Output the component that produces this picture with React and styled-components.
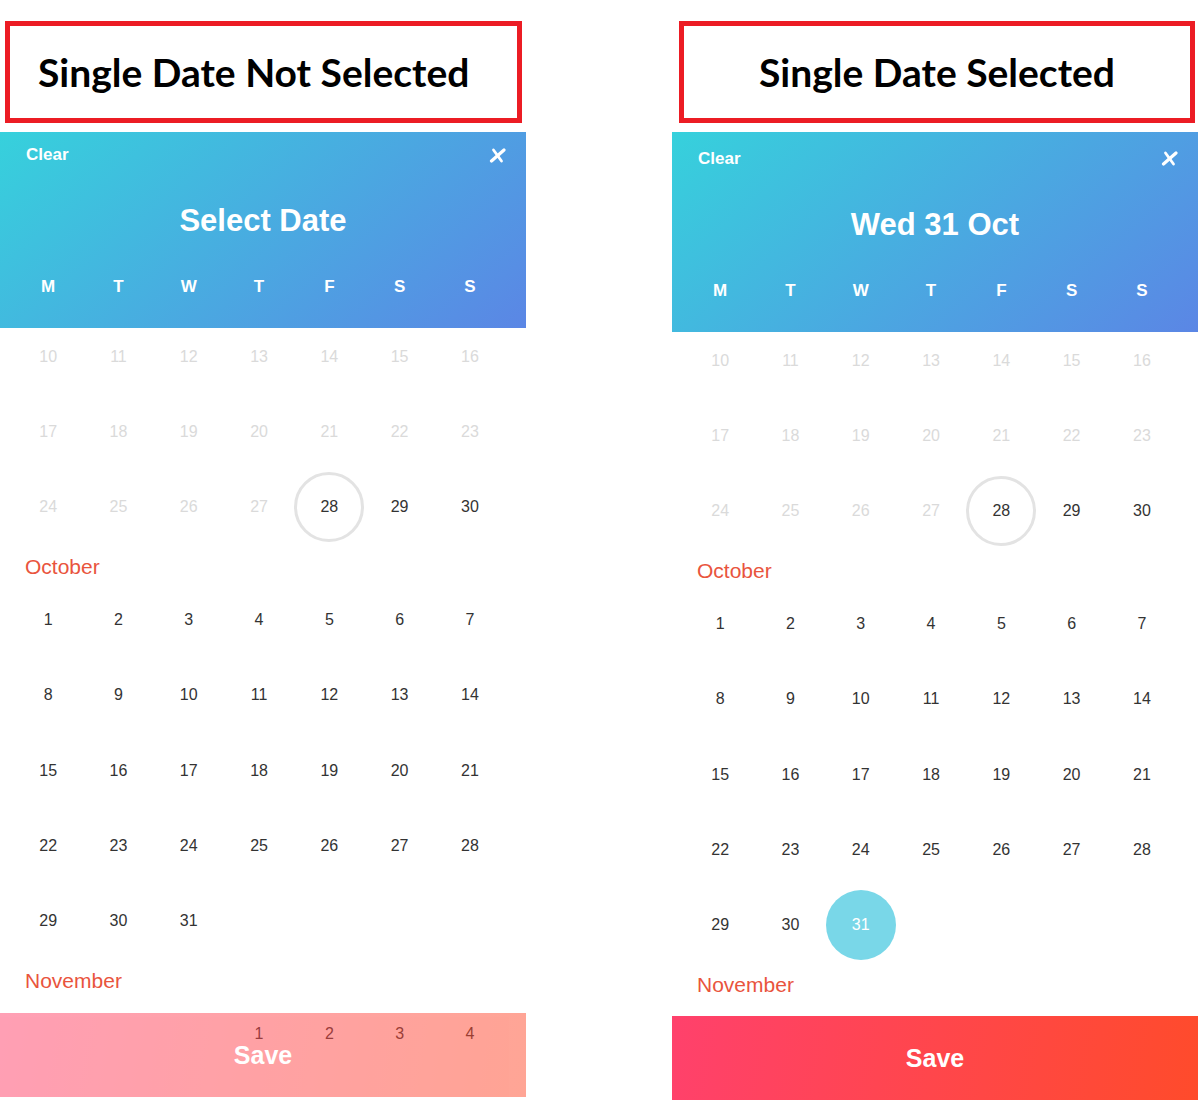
import React, { useLayoutEffect, useRef } from 'react';
import styled, { createGlobalStyle } from 'styled-components';

const GlobalStyle = createGlobalStyle`
  html, body { margin: 0; padding: 0; background: #fff; }
  body { font-family: "Liberation Sans", Arial, sans-serif; }
`;

const Page = styled.div`
  display: flex;
  gap: 146px;
  width: 1198px;
  height: 1100px;
  overflow: hidden;
`;

const Column = styled.div`
  width: 526px;
  display: flex;
  flex-direction: column;
`;

const Caption = styled.div`
  margin: 21px ${(p) => p.$mr}px 0 ${(p) => p.$ml}px;
  height: 102px;
  box-sizing: border-box;
  border: 5px solid #ec1c24;
  display: flex;
  align-items: center;
  justify-content: ${(p) => (p.$center ? 'center' : 'flex-start')};
  padding-left: ${(p) => (p.$center ? 0 : 28)}px;
  font-family: Lato, "Open Sans", sans-serif;
  font-weight: 700;
  font-size: 39px;
  color: #000;
`;

const Picker = styled.div`
  margin-top: 9px;
  position: relative;
  height: ${(p) => p.$h}px;
  display: flex;
  flex-direction: column;
  overflow: hidden;
`;

const Header = styled.div`
  background: linear-gradient(140deg, #36d1dc 0%, #5b86e5 100%);
  padding: ${(p) => p.$top}px 0 31px;
  color: #fff;
  flex: none;
`;

const TopRow = styled.div`
  display: flex;
  justify-content: space-between;
  align-items: center;
  height: 20px;
  padding: 0 20px 0 26px;
`;

const ClearBtn = styled.span`
  font-weight: 700;
  font-size: 17px;
`;

const Title = styled.div`
  margin-top: 38px;
  height: 36px;
  line-height: 36px;
  text-align: center;
  font-weight: 700;
  font-size: 31px;
`;

const Grid7 = styled.div`
  display: grid;
  grid-template-columns: repeat(7, 70.3px);
  padding-left: 13px;
`;

const Weekdays = styled(Grid7)`
  margin-top: 38px;
  height: 20px;
  line-height: 20px;
`;

const Weekday = styled.span`
  text-align: center;
  font-weight: 700;
  font-size: 17px;
`;

const Scroller = styled.div`
  flex: 1;
  min-height: 0;
  overflow: hidden;
`;

const MonthLabel = styled.div`
  height: 37.65px;
  box-sizing: border-box;
  padding: 7px 0 0 25px;
  display: flex;
  align-items: center;
  font-size: 21px;
  color: #e9543d;
`;

const Week = styled(Grid7)`
  height: 75.3px;
`;

const Day = styled.div`
  display: flex;
  align-items: center;
  justify-content: center;
`;

const DayMark = styled.span`
  width: 70px;
  height: 70px;
  flex: none;
  border-radius: 50%;
  box-sizing: border-box;
  display: flex;
  align-items: center;
  justify-content: center;
  font-size: 16px;
  color: ${(p) => (p.$selected ? '#fff' : p.$disabled ? '#dadada' : '#333')};
  background: ${(p) => (p.$selected ? '#79d7e8' : 'transparent')};
  border: 3px solid ${(p) => (p.$today ? '#e3e3e3' : 'transparent')};
`;

const SaveBar = styled.button`
  position: absolute;
  left: 0;
  right: 0;
  bottom: 0;
  height: 84px;
  border: 0;
  padding: 0;
  background: linear-gradient(100deg, #ff416c 0%, #ff4b2b 100%);
  opacity: ${(p) => (p.$dim ? 0.5 : 1)};
  color: #fff;
  font-family: "Liberation Sans", Arial, sans-serif;
  font-weight: 700;
  font-size: 25px;
`;

const CloseIcon = () => (
  <svg width="17" height="15" viewBox="0 0 17 15" fill="none">
    <path d="M4.5 2 L12.5 13" stroke="#fff" strokeWidth="2.8" strokeLinecap="round" />
    <path d="M15 2 L2.5 13" stroke="#fff" strokeWidth="3.2" strokeLinecap="round" />
  </svg>
);

const WEEKDAYS = ['M', 'T', 'W', 'T', 'F', 'S', 'S'];

function buildMonth(startOffset, length) {
  const cells = [];
  for (let i = 0; i < startOffset; i++) cells.push(null);
  for (let d = 1; d <= length; d++) cells.push(d);
  while (cells.length % 7) cells.push(null);
  const weeks = [];
  for (let i = 0; i < cells.length; i += 7) weeks.push(cells.slice(i, i + 7));
  return weeks;
}

// The list is loaded from the week of Sep 10 onward and scrolled a little.
const MONTHS = [
  { key: 'sep', name: null, weeks: buildMonth(5, 30).slice(2) },
  { key: 'oct', name: 'October', weeks: buildMonth(0, 31) },
  { key: 'nov', name: 'November', weeks: buildMonth(3, 30).slice(0, 2) },
];

function DatePicker({ selected, headerTop, height }) {
  const ref = useRef(null);
  useLayoutEffect(() => {
    if (ref.current) ref.current.scrollTop = 9;
  }, []);
  return (
    <Picker $h={height}>
      <Header $top={headerTop}>
        <TopRow>
          <ClearBtn>Clear</ClearBtn>
          <CloseIcon />
        </TopRow>
        <Title>{selected ? 'Wed 31 Oct' : 'Select Date'}</Title>
        <Weekdays>
          {WEEKDAYS.map((w, i) => (
            <Weekday key={i}>{w}</Weekday>
          ))}
        </Weekdays>
      </Header>
      <Scroller ref={ref}>
        {MONTHS.map((m) => (
          <React.Fragment key={m.key}>
            {m.name && <MonthLabel>{m.name}</MonthLabel>}
            {m.weeks.map((week, wi) => (
              <Week key={wi}>
                {week.map((d, di) => {
                  const isSep = m.key === 'sep';
                  const disabled = isSep && d < 28;
                  const today = isSep && d === 28;
                  const sel = selected && m.key === 'oct' && d === 31;
                  return (
                    <Day key={di}>
                      {d && (
                        <DayMark $disabled={disabled} $today={today} $selected={sel}>
                          {d}
                        </DayMark>
                      )}
                    </Day>
                  );
                })}
              </Week>
            ))}
          </React.Fragment>
        ))}
      </Scroller>
      <SaveBar $dim={!selected}>Save</SaveBar>
    </Picker>
  );
}

export default function App() {
  return (
    <>
      <GlobalStyle />
      <Page>
        <Column>
          <Caption $ml={5} $mr={4}>Single Date Not Selected</Caption>
          <DatePicker selected={false} headerTop={13} height={965} />
        </Column>
        <Column>
          <Caption $ml={7} $mr={3} $center>Single Date Selected</Caption>
          <DatePicker selected headerTop={17} height={969} />
        </Column>
      </Page>
    </>
  );
}
